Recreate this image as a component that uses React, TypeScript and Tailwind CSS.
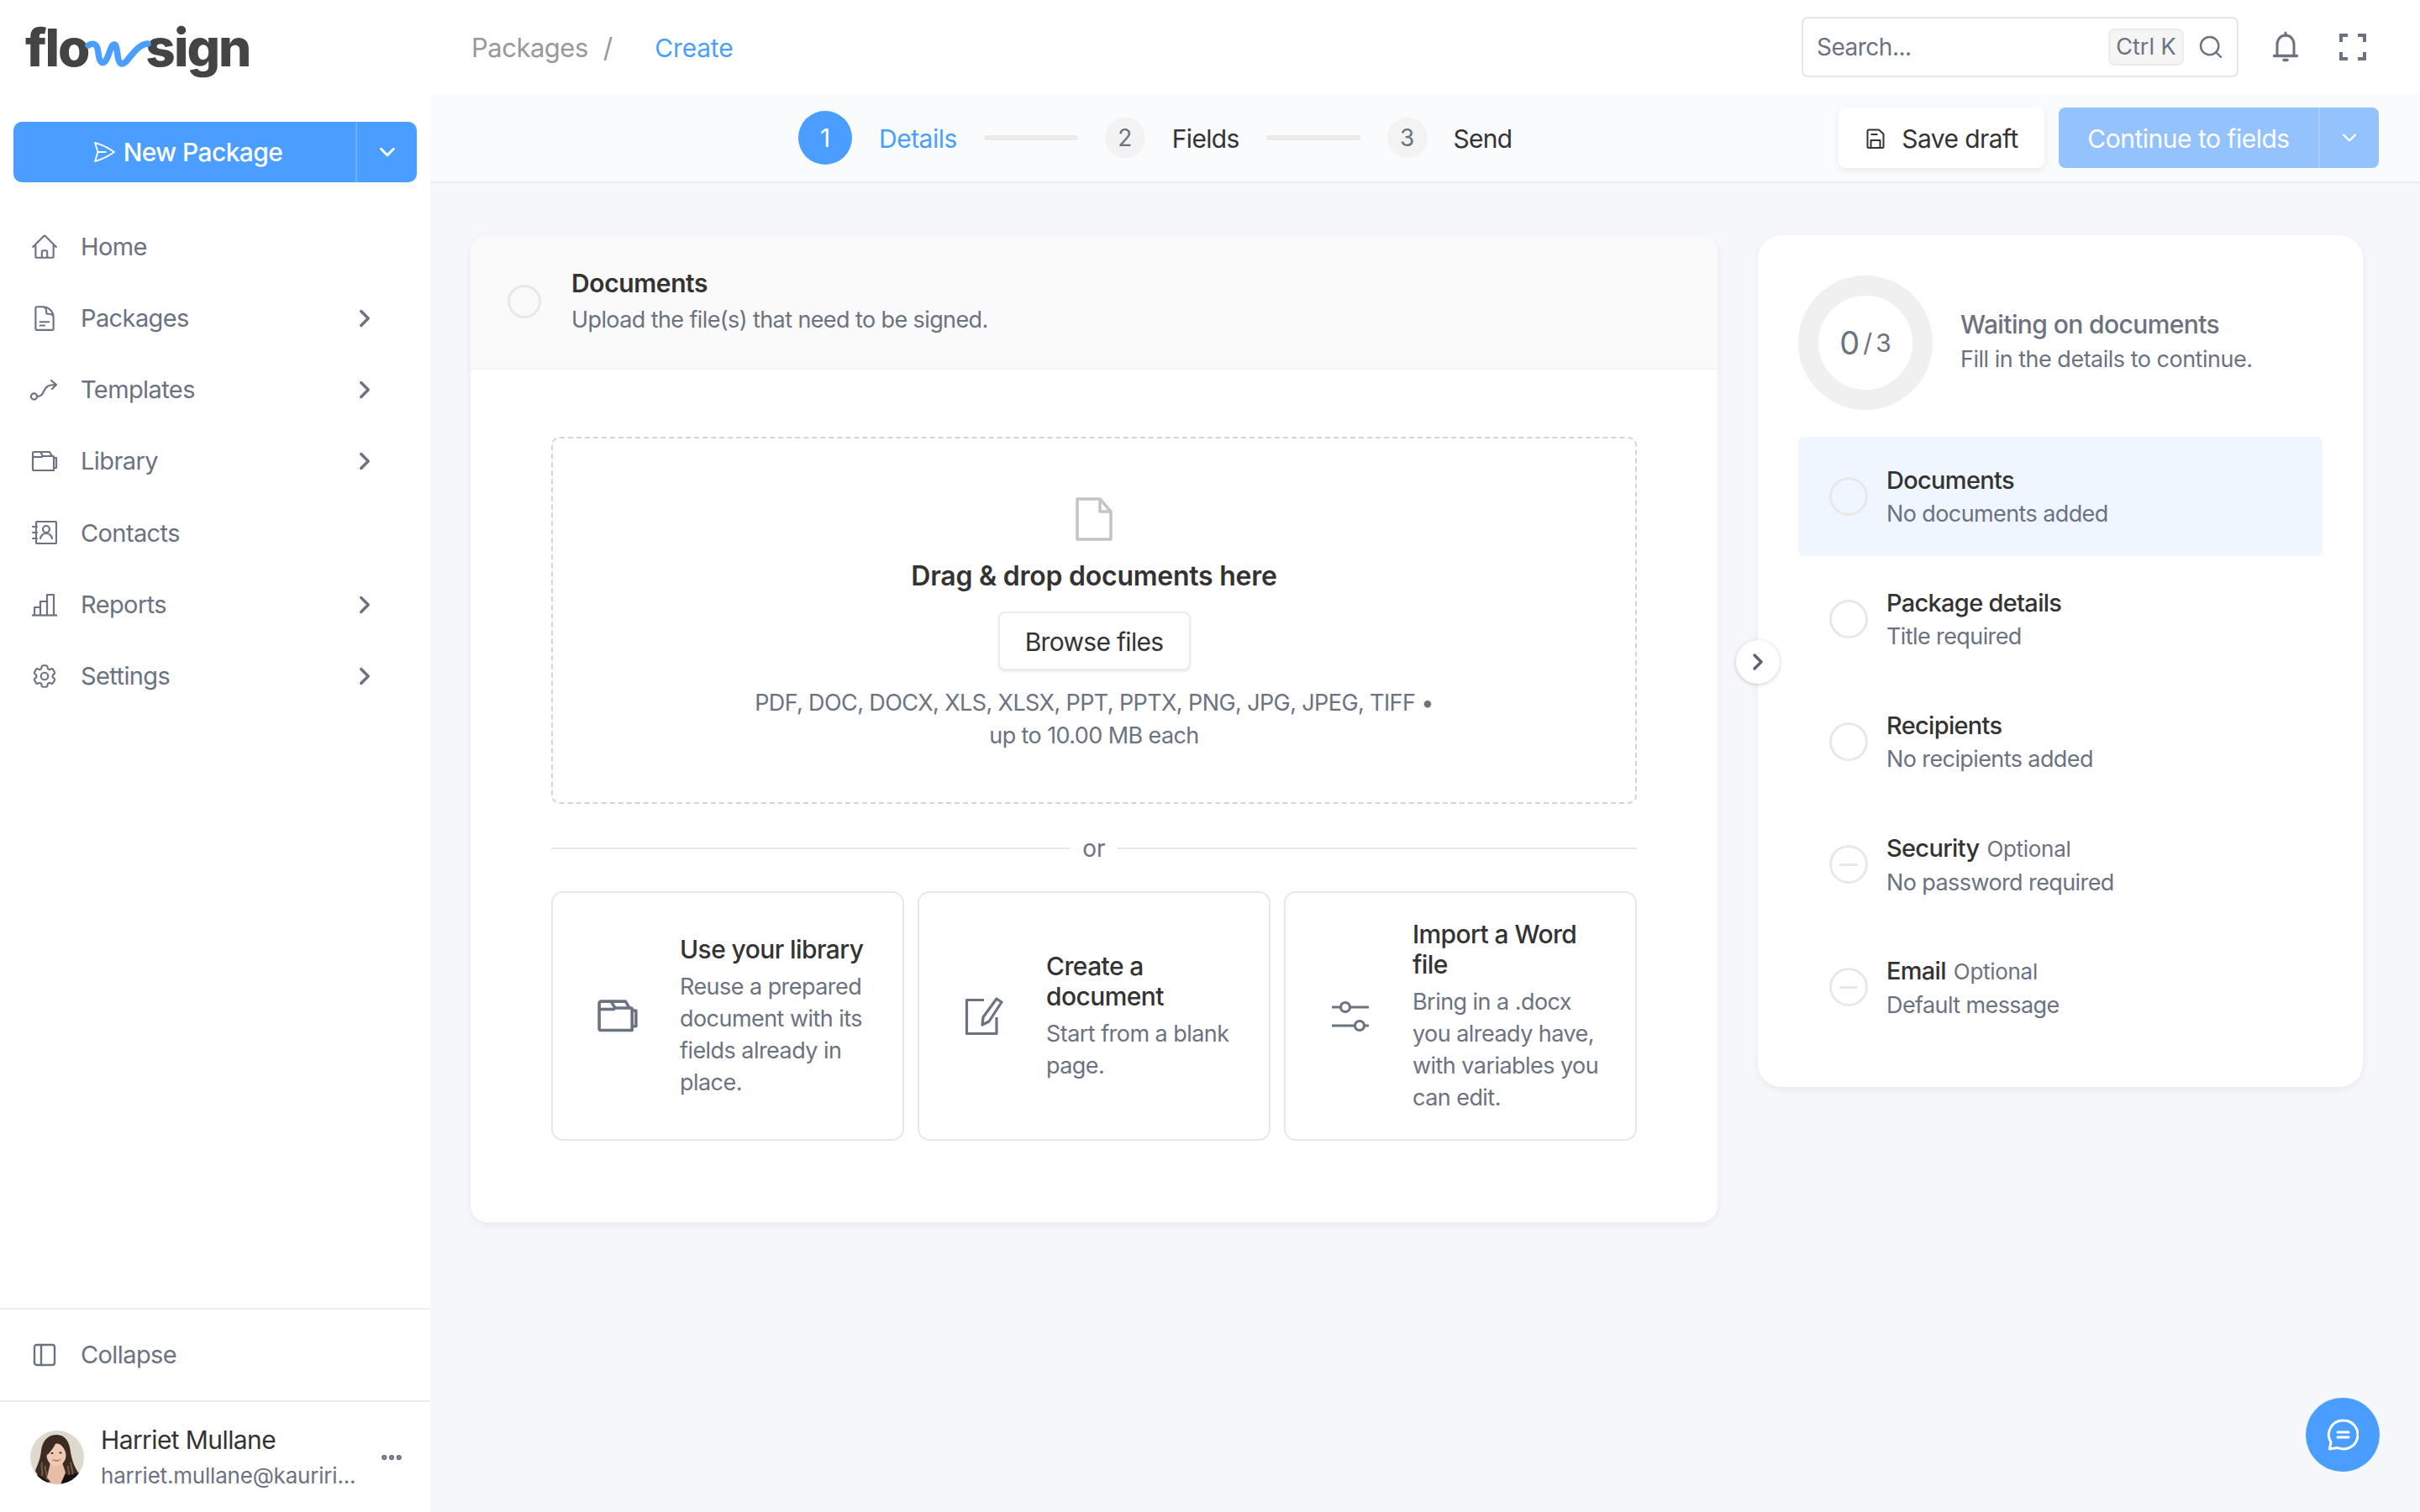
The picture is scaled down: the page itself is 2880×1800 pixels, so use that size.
import { ChevronDown, ChevronRight, Ellipsis, PanelLeft, Search } from "lucide-react";
import { HiOutlineCog6Tooth, HiOutlineDocumentText, HiOutlineHome, HiOutlinePaperAirplane } from "react-icons/hi2";

function RouteIcon() {
  return (
    <svg width="36" height="28" viewBox="0 0 36 28" fill="none" stroke="currentColor" strokeWidth="2.200" strokeLinecap="round" strokeLinejoin="round">
      <circle cx="5.500" cy="22" r="3.600" />
      <path d="M9.500 22c5 0 6-3 8-7s4-7 14-7" />
      <path d="M26 3l6 5-5 5" />
    </svg>
  );
}

function FoldersIcon({ size = 32, sw = 2.2 }: { size?: number; sw?: number }) {
  return (
    <svg width={size} height={size * 0.8125} viewBox="0 0 32 26" fill="none" stroke="#6b7280" strokeWidth={sw} strokeLinejoin="round">
      <path d="M2 8V3.500A1.500 1.500 0 0 1 3.500 2H11l3 5h12a1 1 0 0 1 1 1v16H3a1 1 0 0 1-1-1z" />
      <path d="M2 8h12" />
      <path d="M11 2h11l3 5" />
      <path d="M27 9h3v12h-3" />
    </svg>
  );
}

function ContactsIcon() {
  return (
    <svg width="30" height="30" viewBox="0 0 30 30" fill="none" stroke="currentColor" strokeWidth="2.200" strokeLinecap="round" strokeLinejoin="round">
      <rect x="5" y="2" width="24" height="26" rx="1" />
      <path d="M1 8h5M1 15h5M1 22h5" />
      <circle cx="17" cy="11" r="4" />
      <path d="M10 22c1-4 4-6 7-6s6 2 7 6" />
    </svg>
  );
}

function ReportsIcon() {
  return (
    <svg width="32" height="28" viewBox="0 0 32 28" fill="none" stroke="currentColor" strokeWidth="2.200" strokeLinejoin="round">
      <path d="M1 26.500h30" />
      <path d="M4 26V17h7v9M11 26V10h8v16M19 26V2h8v24" />
    </svg>
  );
}

function SaveIcon() {
  return (
    <svg width="22" height="24" viewBox="0 0 22 24" fill="none" stroke="#333" strokeWidth="2" strokeLinejoin="round">
      <path d="M3 1.500h12l5.500 5v15a1.500 1.500 0 0 1-1.500 1.500H3a1.500 1.500 0 0 1-1.500-1.500V3A1.500 1.500 0 0 1 3 1.500z" />
      <path d="M5.500 23v-9h11v9" />
      <path d="M5.500 7h8" />
    </svg>
  );
}

function CornersIcon() {
  return (
    <svg width="32" height="32" viewBox="0 0 32 32" fill="none" stroke="#6b7280" strokeWidth="4">
      <path d="M2 10V2h8M22 2h8v8M30 22v8h-8M10 30H2v-8" />
    </svg>
  );
}

function BellIcon() {
  return (
    <svg width="30" height="38" viewBox="0 0 30 38" fill="none" stroke="#6b7280" strokeWidth="3" strokeLinecap="round" strokeLinejoin="round">
      <path d="M15 2v3" />
      <path d="M5 28V16c0-6 4-11 10-11s10 5 10 11v12" />
      <path d="M1.500 29.500h27" strokeWidth="3.500" />
      <path d="M13 34.500h4" strokeWidth="3.500" />
    </svg>
  );
}

function FileIcon() {
  return (
    <svg width="44" height="52" viewBox="0 0 44 52" fill="none" stroke="#c4c4c4" strokeWidth="3.500" strokeLinejoin="round">
      <path d="M2 2h27l13 15v33H2z" />
      <path d="M29 2v15h13" />
    </svg>
  );
}

function PenIcon() {
  return (
    <svg width="46" height="46" viewBox="0 0 46 46" fill="none" stroke="#6b7280" strokeWidth="3.200" strokeLinejoin="round">
      <path d="M23 3.500H2.500v40H38V24" />
      <path d="M38 2l6 4-15 23-8 4 1-9z" />
    </svg>
  );
}

function SlidersIcon() {
  return (
    <svg width="44" height="40" viewBox="0 0 44 40" fill="none" stroke="#6b7280" strokeWidth="3.200" strokeLinecap="round">
      <path d="M1 9h9M22 9h21M1 31h26M39 31h4" />
      <circle cx="16" cy="9" r="5.500" />
      <circle cx="33" cy="31" r="5.500" />
    </svg>
  );
}

function ChatIcon() {
  return (
    <svg width="38" height="38" viewBox="0 0 38 38" fill="none" stroke="white" strokeWidth="3" strokeLinecap="round" strokeLinejoin="round">
      <path d="M20 2a17 17 0 1 1-7 32.500L3.500 36 5 28A17 17 0 0 1 20 2z" />
      <path d="M13 16h13M13 22h13" />
    </svg>
  );
}

function Avatar() {
  return (
    <svg width="64" height="64" viewBox="0 0 64 64" className="rounded-full">
      <rect width="64" height="64" fill="#ddd9cf" />
      <path d="M31 5C20 5 14 14 13 24c-1 10-4 16-7 24 4 8 12 14 20 14h16c6-4 12-8 15-12-5-8-7-14-9-24C47 14 42 5 31 5z" fill="#3d2a22" />
      <path d="M14 38c-2 6 2 10 0 16M18 42c-1 6 3 10 2 16M48 38c0 6 4 10 2 16M45 42c-1 4 2 7 1 11" fill="none" stroke="#7a5a45" strokeWidth="2" />
      <path d="M36 64l6-12c4 2 10 0 16-2l6 14zM8 52l12 8 4 4H10z" fill="#15120f" />
      <path d="M24 38h14l4 12-6 14H26l-6-8z" fill="#e6bda6" />
      <ellipse cx="31" cy="29" rx="11.500" ry="13.500" fill="#efc9b2" />
      <path d="M19 30c1-12 8-19 14-20 6 3 10 10 10 20-1-8-6-14-12-16-3 6-7 12-12 16z" fill="#3d2a22" />
      <ellipse cx="26" cy="27" rx="1.600" ry="1.100" fill="#3a2a24" />
      <ellipse cx="36" cy="26.500" rx="1.600" ry="1.100" fill="#3a2a24" />
      <path d="M25.500 34c3 1.500 8 1.500 11-.5-1.500 4-9 4.500-11 .5z" fill="#c9657a" />
    </svg>
  );
}

const navItems = [
  { label: "Home", icon: <HiOutlineHome size={34} />, more: false },
  { label: "Packages", icon: <HiOutlineDocumentText size={34} />, more: true },
  { label: "Templates", icon: <RouteIcon />, more: true },
  { label: "Library", icon: <FoldersIcon />, more: true },
  { label: "Contacts", icon: <ContactsIcon />, more: false },
  { label: "Reports", icon: <ReportsIcon />, more: true },
  { label: "Settings", icon: <HiOutlineCog6Tooth size={34} />, more: true },
];

const checklist = [
  { title: "Documents", sub: "No documents added", active: true },
  { title: "Package details", sub: "Title required" },
  { title: "Recipients", sub: "No recipients added" },
  { title: "Security", sub: "No password required", optional: true },
  { title: "Email", sub: "Default message", optional: true },
];

function Sidebar() {
  return (
    <aside className="flex w-[512px] shrink-0 flex-col bg-white">
      <div className="relative h-[145px] whitespace-nowrap pl-[30px] pt-[17px] text-[62px] leading-[80px] font-extrabold tracking-[-2px] text-[#444444]">
        <span>flo</span>
        <span className="inline-block w-[68px]" />
        <span>sign</span>
        <svg className="absolute left-[100px] top-[45px]" width="80" height="38" viewBox="0 0 80 38" fill="none" stroke="#4a9eff" strokeWidth="7.500" strokeLinecap="round">
          <path d="M5 9c7-4 11-1 12 9 1 10 4 14 8 10 5-5 6-20 11-20 5 0 2 22 9 23 7 1 15-23 31-24" />
        </svg>
      </div>

      <div className="mx-4 flex h-[72px] items-center rounded-[10px] bg-[#4a9eff] text-white">
        <div className="flex flex-1 items-center justify-center gap-[8px] pl-[6px] text-[30px] font-medium tracking-[-0.6px]">
          <HiOutlinePaperAirplane size={30} />
          New Package
        </div>
        <div className="flex h-full w-[73px] items-center justify-center border-l-2 border-[#6cb0ff]">
          <ChevronDown size={30} strokeWidth={2.400} />
        </div>
      </div>

      <nav className="mt-[34px] flex flex-col">
        {navItems.map((item) => (
          <div key={item.label} className="flex h-[85.200px] items-center text-[29px] tracking-[-0.6px] text-[#6b7280]">
            <div className="flex w-[96px] justify-center pl-[10px] pr-[1px]">{item.icon}</div>
            <span>{item.label}</span>
            {item.more && <ChevronRight className="ml-auto mr-[61px]" size={34} strokeWidth={2.400} />}
          </div>
        ))}
      </nav>

      <div className="mt-auto flex h-[110px] items-center border-t-2 border-[#ededed] text-[29px] tracking-[-0.6px] text-[#6b7280]">
        <div className="flex w-[96px] justify-center pl-[10px] pr-[1px]">
          <PanelLeft size={32} strokeWidth={1.800} />
        </div>
        Collapse
      </div>

      <div className="flex h-[133px] items-center border-t-2 border-[#ededed] pl-[36px]">
        <Avatar />
        <div className="ml-[20px] w-[312px]">
          <div className="text-[30px] leading-[40px] tracking-[-0.6px] text-[#333333]">Harriet Mullane</div>
          <div className="mt-[5px] whitespace-nowrap text-[26px] leading-[36px] tracking-[-0.2px] text-[#6b7280]">harriet.mullane@kauriri...</div>
        </div>
        <Ellipsis className="ml-auto mr-[31px] text-[#6b7280]" size={30} strokeWidth={3} />
      </div>
    </aside>
  );
}

function Topbar() {
  return (
    <header className="flex h-[112px] items-center bg-white pl-[49px] pr-[64px]">
      <span className="pt-[2px] text-[31px] tracking-[-0.5px] text-[#999999]">Packages</span>
      <span className="ml-[18px] pt-[2px] text-[32px] text-[#999999]">/</span>
      <span className="ml-[50px] pt-[2px] text-[30px] tracking-[-0.2px] text-[#4a9eff]">Create</span>
      <div className="ml-auto flex h-[72px] w-[520px] items-center rounded-[8px] border-2 border-[#e6e6e6] pl-[16px]">
        <span className="text-[28px] tracking-[-0.5px] text-[#6b7280]">Search...</span>
        <span className="ml-auto flex h-[44px] w-[90px] items-center justify-center rounded-[8px] border-2 border-[#ececec] bg-[#f5f5f5] text-[27px] text-[#6b7280]">Ctrl K</span>
        <Search className="ml-[16px] mr-[15px] text-[#6b7280]" size={32} strokeWidth={1.800} />
      </div>
      <div className="ml-[41px]">
        <BellIcon />
      </div>
      <div className="ml-[49px]">
        <CornersIcon />
      </div>
    </header>
  );
}

function StepDot({ n }: { n: number }) {
  return <span className="flex h-[48px] w-[48px] items-center justify-center rounded-full bg-[#f3f3f3] text-[28px] text-[#6b7280]">{n}</span>;
}

function Stepper() {
  return (
    <div className="flex h-[106px] items-center border-b-2 border-[#ebecee] bg-[#fafbfd] pl-[438px] pr-[49px]">
      <span className="flex h-[64px] w-[64px] items-center justify-center rounded-full bg-[#4a9eff] text-[30px] text-white">1</span>
      <span className="ml-[32px] pt-[2px] text-[30px] tracking-[-0.5px] text-[#4a9eff]">Details</span>
      <span className="ml-[32px] h-[6px] w-[112px] rounded-sm bg-[#ebebeb]" />
      <span className="ml-[32px]"><StepDot n={2} /></span>
      <span className="ml-[32px] pt-[2px] text-[30px] tracking-[-0.7px] text-[#333333]">Fields</span>
      <span className="ml-[32px] h-[6px] w-[112px] rounded-sm bg-[#ebebeb]" />
      <span className="ml-[32px]"><StepDot n={3} /></span>
      <span className="ml-[31px] pt-[2px] text-[30px] tracking-[-0.8px] text-[#333333]">Send</span>

      <button className="ml-auto flex h-[72px] w-[245px] items-center justify-center gap-[20px] rounded-[8px] bg-white pl-[2px] pt-[2px] text-[30px] tracking-[-0.6px] text-[#333333] shadow-[0_3px_8px_rgba(0,0,0,0.07)]">
        <SaveIcon />
        Save draft
      </button>
      <div className="ml-[17px] flex h-[72px] w-[381px] items-center rounded-[8px] bg-[#93c2fd] text-white">
        <span className="flex-1 pt-[2px] text-center text-[30px] tracking-[-0.5px]">Continue to fields</span>
        <span className="flex h-full w-[72px] items-center justify-center border-l-2 border-[#a9cffd]">
          <ChevronDown size={28} strokeWidth={2} />
        </span>
      </div>
    </div>
  );
}

function OptionCard({ icon, title, lines }: { icon: React.ReactNode; title: string[]; lines: string[] }) {
  return (
    <div className="flex h-[297px] items-center rounded-[14px] border-2 border-[#e8e8e8] bg-white pl-[50px]">
      <div className="flex w-[54px] shrink-0 justify-center">{icon}</div>
      <div className="ml-[47px]">
        {title.map((t) => (
          <div key={t} className="text-[30px] leading-[36px] font-medium tracking-[-0.6px] text-[#333333]">{t}</div>
        ))}
        <div className="mt-[8px]">
          {lines.map((l) => (
            <div key={l} className="text-[27px] leading-[38px] tracking-[-0.55px] text-[#6b7280]">{l}</div>
          ))}
        </div>
      </div>
    </div>
  );
}

function DocumentsCard() {
  return (
    <section className="h-[1175px] w-[1484px] overflow-hidden rounded-[20px] bg-white shadow-[0_3px_10px_rgba(0,0,0,0.06)]">
      <div className="flex h-[160px] items-center border-b-2 border-[#f2f2f2] bg-[#fafafa] pl-[44px]">
        <span className="h-[40px] w-[40px] rounded-full border-[3px] border-[#e8e8e8]" />
        <div className="ml-[36px]">
          <div className="text-[30px] leading-[44px] font-semibold tracking-[-0.4px] text-[#333333]">Documents</div>
          <div className="text-[27px] leading-[44px] tracking-[-0.6px] text-[#6b7280]">Upload the file(s) that need to be signed.</div>
        </div>
      </div>

      <div className="px-[96px] pt-[80px]">
        <div className="flex h-[437px] flex-col items-center rounded-[10px] border-2 border-dashed border-[#d4d4d4] pt-[70px]">
          <FileIcon />
          <div className="mt-[20px] text-[32px] leading-[44px] font-semibold tracking-[-0.25px] text-[#333333]">Drag &amp; drop documents here</div>
          <button className="mt-[20px] h-[70px] w-[229px] rounded-[8px] border-2 border-[#ebebeb] bg-white pt-[2px] text-[30px] tracking-[-0.7px] text-[#333333] shadow-[0_2px_3px_rgba(0,0,0,0.08)]">Browse files</button>
          <div className="mt-[19px] text-center text-[27px] leading-[39px] tracking-[-0.6px] text-[#6b7280]">
            <div>PDF, DOC, DOCX, XLS, XLSX, PPT, PPTX, PNG, JPG, JPEG, TIFF •</div>
            <div>up to 10.00 MB each</div>
          </div>
        </div>

        <div className="mt-[33px] flex h-[40px] items-center">
          <span className="h-[2px] flex-1 bg-[#e8e8e8]" />
          <span className="w-[56px] text-center text-[28px] text-[#6b7280]">or</span>
          <span className="h-[2px] flex-1 bg-[#e8e8e8]" />
        </div>

        <div className="mt-[31px] grid grid-cols-3 gap-4">
          <OptionCard icon={<FoldersIcon size={50} sw={2.300} />} title={["Use your library"]} lines={["Reuse a prepared", "document with its", "fields already in", "place."]} />
          <OptionCard icon={<PenIcon />} title={["Create a", "document"]} lines={["Start from a blank", "page."]} />
          <OptionCard icon={<SlidersIcon />} title={["Import a Word", "file"]} lines={["Bring in a .docx", "you already have,", "with variables you", "can edit."]} />
        </div>
      </div>
    </section>
  );
}

function ChecklistPanel() {
  return (
    <section className="relative h-[1014px] w-[720px] rounded-[28px] bg-white px-[48px] pt-[48px] shadow-[0_3px_10px_rgba(0,0,0,0.06)]">
      <button className="absolute -left-[26px] top-[482px] flex h-[52px] w-[52px] items-center justify-center rounded-full bg-white text-[#5a6274] shadow-[0_1px_5px_rgba(0,0,0,0.2)]">
        <ChevronRight size={32} strokeWidth={2.600} />
      </button>

      <div className="flex items-center">
        <div className="flex h-[160px] w-[160px] items-center justify-center rounded-full border-[24px] border-[#f0f0f0] text-[#6b7280]">
          <span className="text-[38px]">0</span>
          <span className="ml-[4px] text-[30px]">/</span>
          <span className="ml-[4px] text-[30px]">3</span>
        </div>
        <div className="ml-[33px] -mt-[5px]">
          <div className="text-[30px] leading-[44px] font-medium tracking-[-0.6px] text-[#6b7280]">Waiting on documents</div>
          <div className="text-[27px] leading-[40px] tracking-[-0.5px] text-[#6b7280]">Fill in the details to continue.</div>
        </div>
      </div>

      <div className="mt-[32px] flex flex-col gap-[4px]">
        {checklist.map((row) => (
          <div key={row.title} className={`flex h-[142px] items-center rounded-[8px] pl-[37px] ${row.active ? "bg-[#eff6ff]" : ""}`}>
            <span className="flex h-[46px] w-[46px] items-center justify-center rounded-full border-[3px] border-[#e8e8e8]">
              {row.optional && <span className="h-[3px] w-[22px] rounded-sm bg-[#e8e8e8]" />}
            </span>
            <div className="ml-[22px] pt-[2px]">
              <div className="flex items-baseline gap-[9px] leading-[40px]">
                <span className="text-[29px] font-medium tracking-[-0.7px] text-[#333333]">{row.title}</span>
                {row.optional && <span className="text-[26px] tracking-[-0.3px] text-[#6b7280]">Optional</span>}
              </div>
              <div className="text-[27px] leading-[40px] tracking-[-0.6px] text-[#6b7280]">{row.sub}</div>
            </div>
          </div>
        ))}
      </div>
    </section>
  );
}

export default function App() {
  return (
    <div className="relative flex h-screen w-full overflow-hidden bg-[#f5f7fb] font-[family-name:Inter,'Liberation_Sans',sans-serif]">
      <Sidebar />
      <div className="flex min-w-0 flex-1 flex-col">
        <Topbar />
        <Stepper />
        <main className="flex items-start gap-[48px] pl-[48px] pt-[62px]">
          <DocumentsCard />
          <ChecklistPanel />
        </main>
      </div>
      <button className="absolute bottom-[48px] right-[48px] flex h-[88px] w-[88px] items-center justify-center rounded-full bg-[#4a9eff]">
        <ChatIcon />
      </button>
    </div>
  );
}
